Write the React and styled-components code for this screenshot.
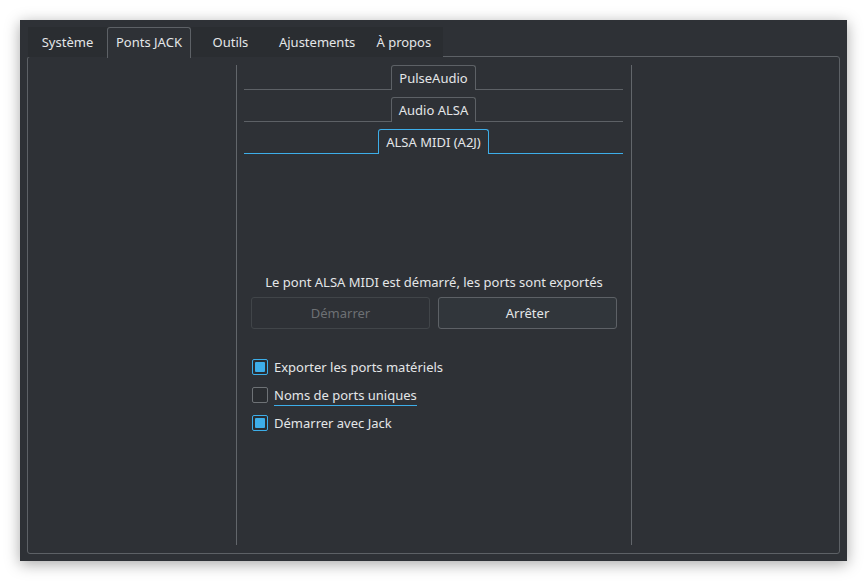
import React from "react";
import styled, { createGlobalStyle } from "styled-components";

const GlobalStyle = createGlobalStyle`
  html, body {
    margin: 0;
    padding: 0;
    background: #ffffff;
  }
  body {
    font-family: "Noto Sans", "DejaVu Sans", sans-serif;
    font-size: 13px;
    color: #e4e6e8;
  }
`;

const topTabs = ["Système", "Ponts JACK", "Outils", "Ajustements", "À propos"];
const bridgeTabs = ["PulseAudio", "Audio ALSA", "ALSA MIDI (A2J)"];

const options = [
  { label: "Exporter les ports matériels", checked: true },
  { label: "Noms de ports uniques", checked: false, focused: true },
  { label: "Démarrer avec Jack", checked: true },
];

const App = () => {
  return (
    <>
      <GlobalStyle />
      <Window>
        <TabBar>
          {topTabs.map((t) => (
            <TopTab key={t} $active={t === "Ponts JACK"}>
              {t}
            </TopTab>
          ))}
        </TabBar>
        <Panel>
          <SideColumn $width={208} />
          <MainColumn>
            {bridgeTabs.map((t, i) => (
              <BridgeRow key={t}>
                <Line $active={i === 2} />
                <BridgeTab $active={i === 2}>{t}</BridgeTab>
                <Line $active={i === 2} />
              </BridgeRow>
            ))}
            <Page>
              <Status>Le pont ALSA MIDI est démarré, les ports sont exportés</Status>
              <Buttons>
                <Button disabled>Démarrer</Button>
                <Button>Arrêter</Button>
              </Buttons>
              <Options>
                {options.map((o) => (
                  <Option key={o.label}>
                    <Box $checked={o.checked} />
                    <OptionLabel $focused={o.focused}>{o.label}</OptionLabel>
                  </Option>
                ))}
              </Options>
            </Page>
          </MainColumn>
          <SideColumn $width={207} />
        </Panel>
      </Window>
    </>
  );
};

export default App;

const Window = styled.div`
  margin: 20px;
  width: 827px;
  height: 541px;
  box-sizing: border-box;
  padding: 7px;
  background: #2e3136;
  box-shadow: 0 3px 14px rgba(0, 0, 0, 0.35);
  display: flex;
  flex-direction: column;
`;

const TabBar = styled.div`
  display: flex;
  height: 30px;
  margin-left: 1px;
  position: relative;
  z-index: 1;
  align-self: flex-start;
  background: #2a2d31;
`;

const TopTab = styled.div`
  min-width: 79px;
  padding: 0 8px 2px;
  box-sizing: border-box;
  display: flex;
  align-items: center;
  justify-content: center;
  height: ${(p) => (p.$active ? "31px" : "30px")};
  border: 1px solid ${(p) => (p.$active ? "#5d6166" : "transparent")};
  border-bottom: none;
  border-radius: 3px 3px 0 0;
  background: ${(p) => (p.$active ? "#2e3136" : "transparent")};
  white-space: nowrap;
`;

const Panel = styled.div`
  flex: 1;
  margin-top: -1px;
  border: 1px solid #5d6166;
  border-radius: 3px;
  padding: 8px 0;
  display: flex;
`;

const SideColumn = styled.div`
  width: ${(p) => p.$width}px;
`;

const MainColumn = styled.div`
  flex: 1;
  border-left: 1px solid #62666b;
  border-right: 1px solid #62666b;
  padding: 0 8px 0 7px;
  display: flex;
  flex-direction: column;
`;

const BridgeRow = styled.div`
  display: flex;
  align-items: flex-end;
  height: 25px;
  & + & {
    margin-top: 7px;
  }
`;

const Line = styled.div`
  flex: 1;
  border-bottom: 1px solid ${(p) => (p.$active ? "#3daee9" : "#5d6166")};
`;

const BridgeTab = styled.div`
  height: 25px;
  box-sizing: border-box;
  padding: 0 7px;
  display: flex;
  align-items: center;
  border: 1px solid ${(p) => (p.$active ? "#3daee9" : "#5d6166")};
  border-bottom: none;
  border-radius: 3px 3px 0 0;
  white-space: nowrap;
`;

const Page = styled.div`
  padding: 119px 6px 0 7px;
  display: flex;
  flex-direction: column;
`;

const Status = styled.div`
  text-align: center;
  line-height: 18px;
`;

const Buttons = styled.div`
  display: flex;
  gap: 8px;
  margin-top: 6px;
`;

const Button = styled.button`
  flex: 1;
  height: 32px;
  font-family: inherit;
  font-size: 13px;
  border-radius: 3px;
  border: 1px solid ${(p) => (p.disabled ? "#414549" : "#5d6166")};
  background: ${(p) => (p.disabled ? "#2e3136" : "#31363b")};
  color: ${(p) => (p.disabled ? "#6d7074" : "#e4e6e8")};
`;

const Options = styled.div`
  margin-top: 29px;
  display: flex;
  flex-direction: column;
  gap: 10px;
  padding-left: 1px;
`;

const Option = styled.div`
  display: flex;
  align-items: center;
  height: 18px;
  gap: 6px;
`;

const Box = styled.div`
  width: 16px;
  height: 16px;
  box-sizing: border-box;
  border-radius: 2px;
  border: 1px solid ${(p) => (p.$checked ? "#3daee9" : "#6e7276")};
  background: #2a2d31;
  padding: 2px;
  &::after {
    content: "";
    display: ${(p) => (p.$checked ? "block" : "none")};
    width: 100%;
    height: 100%;
    border-radius: 1px;
    background: #3daee9;
  }
`;

const OptionLabel = styled.span`
  line-height: 18px;
  border-bottom: 1px solid ${(p) => (p.$focused ? "#3daee9" : "transparent")};
  padding-bottom: ${(p) => (p.$focused ? "1px" : "0")};
  margin-bottom: ${(p) => (p.$focused ? "-2px" : "0")};
`;
